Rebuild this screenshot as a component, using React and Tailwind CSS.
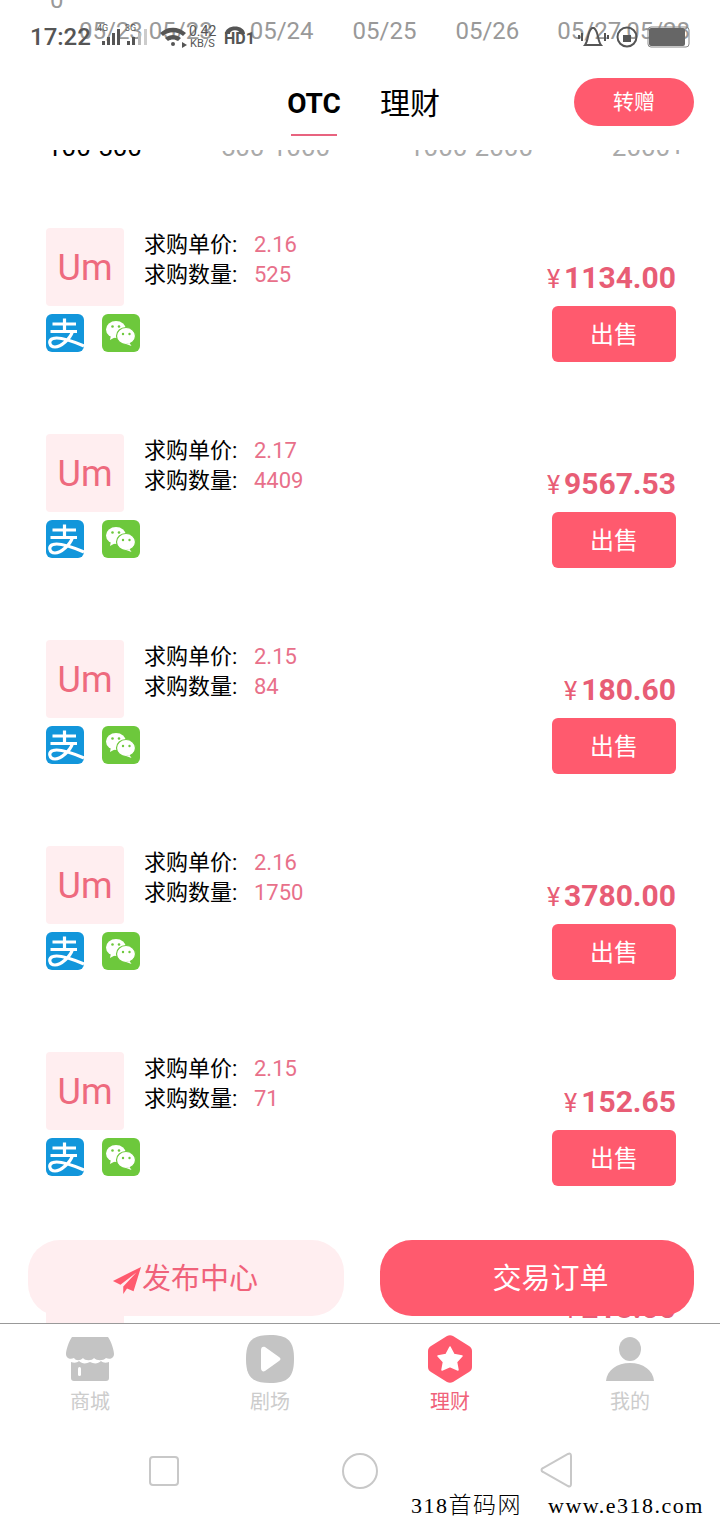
const roboto = "font-[Roboto,'Noto_Sans_CJK_SC',sans-serif]";

const orders = [
  { price: "2.16", qty: "525", total: "1134.00" },
  { price: "2.17", qty: "4409", total: "9567.53" },
  { price: "2.15", qty: "84", total: "180.60" },
  { price: "2.16", qty: "1750", total: "3780.00" },
  { price: "2.15", qty: "71", total: "152.65" },
  { price: "2.18", qty: "100", total: "218.00" },
];

function Alipay() {
  return (
    <svg width="38" height="38" viewBox="0 0 38 38" fill="none">
      <rect width="38" height="38" rx="6" fill="#1296db" />
      <path d="M6.500 10H30M18.500 4.500V17M4.500 17.500H31" stroke="#fff" strokeWidth="3.200" />
      <path d="M26.500 17.500C24 25 15 33 9 33C3 33 2 26 7 24.500C13 22.500 24 26 38 32" stroke="#fff" strokeWidth="3.200" />
    </svg>
  );
}

function Wechat() {
  return (
    <svg width="38" height="38" viewBox="0 0 38 38">
      <rect width="38" height="38" rx="6" fill="#6dc83c" />
      <ellipse cx="14" cy="15.500" rx="10" ry="8.500" fill="#fff" />
      <path d="M9 21L8 26L13.500 23Z" fill="#fff" />
      <ellipse cx="24" cy="22" rx="9.500" ry="8.500" fill="#fff" stroke="#6dc83c" strokeWidth="1.200" />
      <path d="M27.500 29L29.500 32L24 30Z" fill="#fff" />
      <circle cx="10.500" cy="12.500" r="1.300" fill="#6dc83c" />
      <circle cx="17" cy="12.500" r="1.300" fill="#6dc83c" />
      <circle cx="21" cy="20" r="1.200" fill="#6dc83c" />
      <circle cx="27.500" cy="20" r="1.200" fill="#6dc83c" />
    </svg>
  );
}

function OrderCard({ order }) {
  return (
    <div className="h-[206px] shrink-0 flex justify-between pl-[46px] pr-[44px]">
      <div>
        <div className="flex gap-[20px]">
          <div className="w-[78px] h-[78px] pt-[2px] rounded bg-[#ffeef0] flex items-center justify-center text-[36px] text-[#ee6a7e]">
            Um
          </div>
          <div className="pt-[2px] text-[22px] leading-[30px]">
            <div className="flex">
              <span className="w-[110px] text-black">求购单价:</span>
              <span className="text-[#e8708a]">{order.price}</span>
            </div>
            <div className="flex">
              <span className="w-[110px] text-black">求购数量:</span>
              <span className="text-[#e8708a]">{order.qty}</span>
            </div>
          </div>
        </div>
        <div className="flex gap-[18px] mt-2">
          <Alipay />
          <Wechat />
        </div>
      </div>
      <div className="flex flex-col items-end pt-[32px]">
        <div className="h-[46px] flex items-baseline text-[#e85d75] leading-[36px]">
          <span className="text-[25px] mr-[4px]">¥</span>
          <span className="text-[30px] font-bold">{order.total}</span>
        </div>
        <button className="w-[124px] h-[56px] pt-[2px] rounded-md bg-[#ff5a6e] text-white text-[24px]">出售</button>
      </div>
    </div>
  );
}

function StatusBar() {
  return (
    <div className="absolute left-0 top-0 w-full h-[60px] text-[#555]">
      <div className="absolute left-[30px] top-[23px] text-[24px] leading-[28px] font-medium">17:22</div>
      <svg className="absolute left-[98px] top-[24px]" width="160" height="24" viewBox="0 0 160 24" fill="#555">
        <rect x="4" y="17" width="3" height="4" />
        <rect x="9" y="13" width="3" height="8" />
        <rect x="14" y="9" width="3" height="12" />
        <rect x="19" y="5" width="3" height="16" />
        <rect x="29" y="17" width="3" height="4" />
        <rect x="34" y="13" width="3" height="8" />
        <rect x="40" y="9" width="3" height="12" fill="#bbb" />
        <rect x="46" y="5" width="3" height="16" fill="#ccc" />
        <path d="M62 9C70 2 80 2 88 9L85 12C79 7 71 7 65 12Z" />
        <path d="M67 14C72 10 78 10 83 14L80 17C77 15 73 15 70 17Z" />
        <circle cx="75" cy="20" r="2" />
        <path d="M84 18L89 21L84 24Z" />
        <path d="M127 10C127 0 147 0 147 10H142C142 5 132 5 132 10Z" />
      </svg>
      <span className="absolute left-[97px] top-[23px] text-[9px] leading-[10px]">4G</span>
      <span className="absolute left-[125px] top-[23px] text-[9px] leading-[10px]">3G</span>
      <span className="absolute left-[189px] top-[24px] text-[14px] leading-[14px]">0.42</span>
      <span className="absolute left-[190px] top-[38px] text-[11px] leading-[11px]">KB/S</span>
      <span className="absolute left-[224px] top-[31px] text-[16px] leading-[16px] font-bold">HD1</span>
      <svg className="absolute left-[578px] top-[24px]" width="116" height="26" viewBox="0 0 116 26" fill="none" stroke="#555" strokeWidth="2">
        <path d="M14 4C9 8 11 16 7 21H23C19 16 21 8 16 4Z" />
        <path d="M4 9V17M1 11V15M27 9V17M30 11V15" />
        <circle cx="49" cy="13" r="9.500" />
        <rect x="45" y="11" width="8" height="7" fill="#555" stroke="none" />
        <rect x="70" y="3" width="41" height="20" rx="3" strokeWidth="1" stroke="#888" />
        <rect x="71" y="4" width="36" height="18" rx="2" fill="#666" stroke="none" />
      </svg>
    </div>
  );
}

function Tab({ label, active, children }) {
  return (
    <div className="flex flex-col items-center">
      <div className="h-[48px] flex items-center">{children}</div>
      <span className={`mt-[7px] text-[20px] leading-[24px] ${active ? "text-[#f0627a]" : "text-[#cccccc]"}`}>{label}</span>
    </div>
  );
}

export default function App() {
  return (
    <div className={`relative w-[720px] h-[1520px] overflow-hidden bg-white flex flex-col ${roboto}`}>
      <div className="flex-1 min-h-0 overflow-hidden">
        <div className="h-[60px] overflow-hidden text-[24px] leading-[28px] text-[#999]">
          <div className="-mt-[14px] ml-[50px] h-[31px]">0</div>
          <div className="flex">
            {/* labels of the chart behind the status bar */}
            <span className="ml-[79px]">05/23</span>
            <span className="ml-[6px]">05/23</span>
            <span className="ml-[37px]">05/24</span>
            <span className="ml-[39px]">05/25</span>
            <span className="ml-[39px]">05/26</span>
            <span className="ml-[38px]">05/27</span>
            <span className="ml-[5px]">05/28</span>
          </div>
        </div>

        <div className="h-[90px] bg-white flex relative">
          <div className="ml-[286px] flex flex-col items-center w-[56px]">
            <span className="mt-[27px] text-[28px] leading-[34px] font-bold text-black">OTC</span>
            <span className="mt-[13px] w-[46px] h-[2px] bg-[#e8637f]" />
          </div>
          <span className="ml-[38px] mt-[25px] text-[30px] leading-[38px] text-black">理财</span>
          <button className="absolute right-[26px] top-[18px] w-[120px] h-[48px] pt-[2px] rounded-full bg-[#ff5a6e] text-white text-[21px]">
            转赠
          </button>
        </div>

        <div className="h-[10px] overflow-hidden flex items-end justify-between pl-[47px] pr-[35px] text-[26px] leading-[26px] text-[#aaa]">
          <span className="text-black">100-500</span>
          <span>500-1000</span>
          <span>1000-2000</span>
          <span>2000+</span>
        </div>

        <div className="mt-[68px]">
          {orders.map((order, i) => (
            <OrderCard key={i} order={order} />
          ))}
        </div>
      </div>

      <div className="absolute left-[28px] right-[26px] top-[1240px] flex gap-[36px]">
        <button className="w-[316px] h-[76px] pt-[3px] rounded-[32px] bg-[#ffeef0] text-[#f0627a] text-[29px] flex items-center justify-center">
          <svg className="-ml-[2px]" width="30" height="30" viewBox="0 0 32 32" fill="#ff5a6e">
            <path d="M31 2L1 17L9 21L26 8L12 23L12 31L16 25L23 28Z" />
          </svg>
          发布中心
        </button>
        <button className="w-[314px] h-[76px] pt-[3px] pl-[27px] rounded-[32px] bg-[#ff5a6e] text-white text-[29px]">交易订单</button>
      </div>

      <div className="h-[197px] shrink-0 bg-white border-t border-[#999] relative z-10">
        <div className="grid grid-cols-4 pt-[11px] px-0">
          <Tab label="商城">
            <svg width="48" height="48" viewBox="0 0 48 48" fill="#c4c4c4">
              <path d="M6 2H42C45 6 48 15 48 19C48 23 44 25 40 23C37 26 31 26 28 23C26 26 19 26 17 23C14 26 10 26 8 23C4 25 0 23 0 19C0 15 3 6 6 2Z" />
              <path d="M5 27C8 28 11 28 13 26C16 29 20 29 24 27C28 29 32 29 35 26C37 28 40 28 43 27V43C43 45 42 46 40 46H8C6 46 5 45 5 43Z" />
              <rect x="12" y="32" width="3" height="9" rx="1.500" fill="#fff" />
            </svg>
          </Tab>
          <Tab label="剧场">
            <svg width="48" height="48" viewBox="0 0 48 48" fill="#c4c4c4">
              <path d="M24 0C42 0 48 6 48 24C48 42 42 48 24 48C6 48 0 42 0 24C0 6 6 0 24 0Z" />
              <path d="M15 15C15 12 17 11 19 12L33 22C35 23 35 25 33 26L19 36C17 37 15 36 15 33Z" fill="#fff" />
            </svg>
          </Tab>
          <Tab active label="理财">
            <svg width="44" height="48" viewBox="0 0 44 48">
              <path d="M19 1C21 0 23 0 25 1L41 11C43 12 44 14 44 16V32C44 34 43 36 41 37L25 47C23 48 21 48 19 47L3 37C1 36 0 34 0 32V16C0 14 1 12 3 11Z" fill="#ff5a6e" />
              <path d="M22 12L26 19.500L34 21L28.500 27L30 35L22 31.500L14 35L15.500 27L10 21L18 19.500Z" fill="#fff" stroke="#fff" strokeWidth="1.500" strokeLinejoin="round" />
            </svg>
          </Tab>
          <Tab label="我的">
            <svg width="48" height="48" viewBox="0 0 48 48" fill="#c4c4c4">
              <ellipse cx="24" cy="14" rx="11" ry="12" />
              <path d="M0 46C1 35 11 28 24 28C37 28 47 35 48 46Z" />
            </svg>
          </Tab>
        </div>

        <div className="mt-[42px] flex">
          <svg className="ml-[149px]" width="30" height="30" viewBox="0 0 30 30" fill="none" stroke="#c8c8c8" strokeWidth="2">
            <rect x="1" y="1" width="28" height="28" rx="3" />
          </svg>
          <svg className="ml-[163px] -mt-[3px]" width="36" height="36" viewBox="0 0 36 36" fill="none" stroke="#c8c8c8" strokeWidth="2">
            <circle cx="18" cy="18" r="17" />
          </svg>
          <svg className="ml-[162px] -mt-[4px]" width="32" height="36" viewBox="0 0 32 36" fill="none" stroke="#c8c8c8" strokeWidth="2">
            <path d="M28 2C30 1 31 2 31 4V32C31 34 30 35 28 34L3 20C1 19 1 17 3 16Z" />
          </svg>
        </div>
      </div>

      <StatusBar />

      <div className="absolute z-20 left-[411px] top-[1491px] flex items-baseline whitespace-pre text-black text-[22px] leading-[30px] tracking-[1.5px] font-['Liberation_Serif','Noto_Sans_CJK_SC',serif]">
        <span>318</span>
        <span className="text-[23px] font-light">首码网</span>
        <span className="ml-[26px]">www.e318.com</span>
      </div>
    </div>
  );
}
